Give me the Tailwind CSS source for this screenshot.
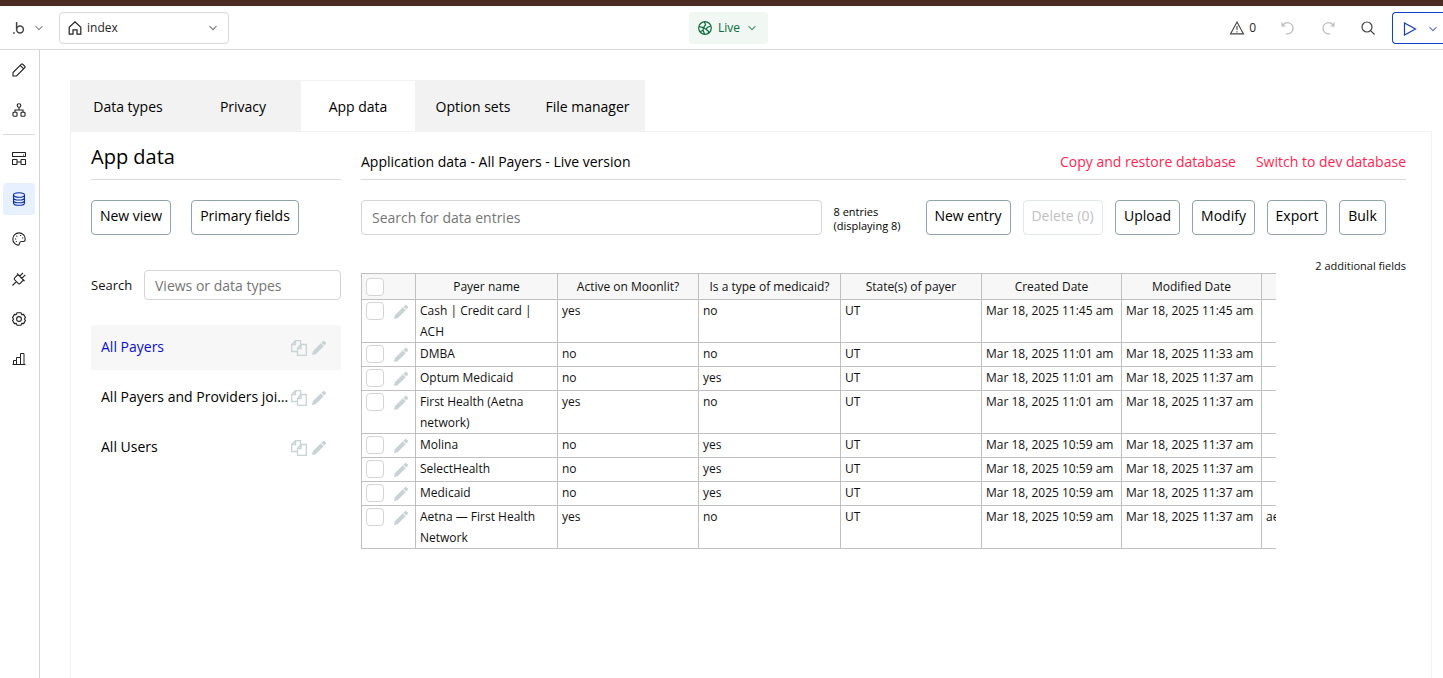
<!DOCTYPE html>
<html lang="en">
<head>
<meta charset="utf-8">
<title>App data</title>
<script src="https://cdn.jsdelivr.net/npm/@tailwindcss/browser@4"></script>
</head>
<body class="h-[678px] w-[1443px] overflow-hidden bg-white font-['Open_Sans','Noto_Sans',sans-serif] text-[14px] text-[#111] antialiased">
<svg class="hidden">
  <symbol id="chev" viewBox="0 0 10 10"><path d="M1.500 3.200 5 6.700l3.500-3.500" fill="none" stroke="currentColor" stroke-width="1.100"/></symbol>
  <symbol id="pen" viewBox="0 0 14 14"><path d="M0 14l.8-3.700L8.800 2.300l2.900 2.900L3.700 13.200zM9.400 1.700l1.300-1.300a1.400 1.400 0 0 1 2 0l.9.9a1.400 1.400 0 0 1 0 2L12.300 4.600z" fill="currentColor"/></symbol>
  <symbol id="copy" viewBox="0 0 16 16"><path d="M6 11.500H.7V4.500L4.500.700H9.500V4.500M4.500.700V4.500H.7M10 4.500h5.300v10.800H6.500V8.500zM10 4.500v4H6.500" fill="none" stroke="currentColor" stroke-width="1.300"/></symbol>
</svg>
<div class="h-1.5 bg-[#4a2c23]"></div>
<header class="flex h-11 items-center border-b border-[#d9d9d9] text-[12px] text-[#262626]">
  <div class="flex w-[59px] items-center pl-3">
    <svg class="h-4 w-4 text-[#444]" viewBox="0 0 16 16" fill="none" stroke="currentColor" stroke-width="1.500"><path d="M4.600 2V9"/><circle cx="8" cy="9.500" r="3.400"/><circle cx="1.900" cy="12.900" r=".9" fill="currentColor" stroke="none"/></svg>
    <svg class="ml-1.5 h-2.5 w-2.5 text-[#888]"><use href="#chev"/></svg>
  </div>
  <div class="flex h-8 w-[170px] items-center rounded border border-[#d9d9d9] pr-2.5 pl-2">
    <svg class="h-[14px] w-[14px] text-[#222]" viewBox="0 0 14 14" fill="none" stroke="currentColor" stroke-width="1.200"><path d="M1.200 13.200V6.300L7 .9l5.800 5.400v6.900H9V8.900H5v4.300z"/></svg>
    <span class="ml-[5px] flex-1">index</span>
    <svg class="h-2.5 w-2.5 text-[#777]"><use href="#chev"/></svg>
  </div>
  <div class="ml-[460px] flex h-8 w-[79px] items-center rounded bg-[#f1f8f4] pl-[9px] text-[#0b6b3a]">
    <svg class="h-[14px] w-[14px]" viewBox="0 0 14 14" fill="none" stroke="currentColor" stroke-width="1.200"><circle cx="7" cy="7" r="6.300"/><path d="M1 5.500 5.500 6.700 7.500 3.800 6.500.8M5.500 6.700 5 9.200 2.300 10.800M13 5 9.500 6.200 8 8.300 10.500 10.300 10.300 12.300M5.500 6.700 8 8.300M5 9.200 6.500 13"/></svg>
    <span class="ml-[6px]">Live</span>
    <svg class="ml-[7px] h-2.5 w-2.5 opacity-70"><use href="#chev"/></svg>
  </div>
  <div class="ml-auto flex items-center">
    <svg class="h-[14px] w-4 text-[#444]" viewBox="0 0 16 14" fill="none" stroke="currentColor" stroke-width="1.100"><path d="M8 1 1.500 12.900h13zM8 5v4M8 10.300v1.200"/></svg>
    <span class="ml-1">0</span>
    <svg class="ml-[25px] h-[14px] w-[14px] text-[#bbb]" viewBox="0 0 14 14" fill="none" stroke="currentColor" stroke-width="1.200"><path d="M1 1.500V5h3.500M1.300 5A5.600 5.600 0 1 1 5 12.700"/></svg>
    <svg class="ml-[26px] h-[14px] w-[14px] text-[#bbb]" viewBox="0 0 14 14" fill="none" stroke="currentColor" stroke-width="1.200"><path d="M13 1.500V5H9.500M12.700 5A5.600 5.600 0 1 0 9 12.700"/></svg>
    <svg class="ml-[26px] h-[14px] w-[14px] text-[#444]" viewBox="0 0 14 14" fill="none" stroke="currentColor" stroke-width="1.200"><circle cx="6" cy="6" r="5"/><path d="m9.600 9.600 3.900 3.900"/></svg>
    <div class="ml-[17px] flex h-8 w-[51px] items-center rounded-l border border-r-0 border-[#0a45c5] pl-[10px] text-[#1a3cae]">
      <svg class="mt-[2px] h-[14px] w-[14px]" viewBox="0 0 14 14" fill="none" stroke="currentColor" stroke-width="1.200"><path d="M1.500 1v12L12.500 7z"/></svg>
      <svg class="ml-[11px] mt-[2px] h-2.5 w-2.5 opacity-70"><use href="#chev"/></svg>
    </div>
  </div>
</header>
<div class="flex h-[628px]">
  <nav class="flex w-10 shrink-0 flex-col border-r border-[#d4d4d4] pl-[3px] text-[#222]">
    <div class="mt-1 flex h-8 w-8 items-center justify-center"><svg class="h-[14px] w-[14px]" viewBox="0 0 14 14" fill="none" stroke="currentColor" stroke-width="1.100"><path d="M1 13V9.500L9.500 1h1L13 3.500v1L4.500 13zM8.200 2.300l3.500 3.500"/></svg></div>
    <div class="mt-2 flex h-8 w-8 items-center justify-center"><svg class="h-[14px] w-[14px]" viewBox="0 0 14 14" fill="none" stroke="currentColor" stroke-width="1.100"><circle cx="7" cy="2.500" r="1.800"/><path d="M7 4.300V7M3 9V7h8v2"/><rect x="1" y="9.200" width="4" height="4" rx=".8"/><rect x="9" y="9.200" width="4" height="4" rx=".8"/></svg></div>
    <div class="mt-2 h-px w-8 bg-[#d9d9d9]"></div>
    <div class="mt-2 flex h-8 w-8 items-center justify-center"><svg class="h-[14px] w-[14px]" viewBox="0 0 14 14" fill="none" stroke="currentColor" stroke-width="1.100"><rect x=".5" y=".5" width="13" height="4" rx=".5"/><rect x=".5" y="7.500" width="4.500" height="5" rx=".5"/><rect x="9" y="7.500" width="4.500" height="5" rx=".5"/><path d="M5 10h4M11 3h1"/></svg></div>
    <div class="mt-2 flex h-8 w-8 items-center justify-center rounded bg-[#e6f0fe] text-[#0f2fa8]"><svg class="h-[14px] w-[14px]" viewBox="0 0 14 14" fill="none" stroke="currentColor" stroke-width="1.100"><ellipse cx="7" cy="3" rx="5.500" ry="2.300"/><path d="M1.500 3v8c0 1.300 2.400 2.300 5.500 2.300s5.500-1 5.500-2.300V3M1.500 5.700C1.500 7 3.900 8 7 8s5.500-1 5.500-2.300M1.500 8.400c0 1.300 2.400 2.300 5.500 2.300s5.500-1 5.500-2.300"/></svg></div>
    <div class="mt-2 flex h-8 w-8 items-center justify-center"><svg class="h-[14px] w-[14px]" viewBox="0 0 14 14" fill="none" stroke="currentColor" stroke-width="1.100"><path d="M7 .9A6.200 6.200 0 0 0 .8 7c0 3.500 3 6.100 5.600 6.100 1.700 0 .3-3.600 2.800-3.600h2.300c1 0 1.700-.8 1.700-2.500C13.200 3.600 10.500.9 7 .9z"/><path d="M3 7h1.200M4.200 4.200h1.200M8 3.500h1.200M10 6h1.200M3.800 9.500h1"/></svg></div>
    <div class="mt-2 flex h-8 w-8 items-center justify-center"><svg class="h-[14px] w-[14px]" viewBox="0 0 14 14" fill="none" stroke="currentColor" stroke-width="1.100"><path d="M5 1.500 12.500 9M6 2.500 2.700 5.800a1.500 1.500 0 0 0 0 2.100l3.400 3.400a1.500 1.500 0 0 0 2.100 0L11.500 8M4.300 9.700.5 13.500M7.700 4.200 10.900 1M9.800 6.300 13.300 2.800"/></svg></div>
    <div class="mt-2 flex h-8 w-8 items-center justify-center"><svg class="h-[14px] w-[14px]" viewBox="0 0 14 14" fill="none" stroke="currentColor" stroke-width="1.100"><path d="M5 .8h4l.7 1.800 1.900-.2 1.900 3.200L12.300 7l1.200 1.400-1.900 3.200-1.900-.2L9 13.200H5l-.7-1.800-1.900.2L.5 8.400 1.700 7 .5 5.600l1.900-3.200 1.900.2z" stroke-linejoin="round"/><circle cx="7" cy="7" r="2.400"/></svg></div>
    <div class="mt-2 flex h-8 w-8 items-center justify-center"><svg class="h-[14px] w-[14px]" viewBox="0 0 14 14" fill="none" stroke="currentColor" stroke-width="1"><path d="M.5 12.500h13M1.500 12.500V8.500h3v4M4.500 8.500V5.500h4v7M8.500 5.500v-4h3.500v11"/></svg></div>
  </nav>
  <main class="flex flex-1 flex-col pt-[30px] pr-[11px] pl-[30px]">
    <div class="flex h-[51px] w-[575px] bg-[#f2f2f2] text-center leading-[53px] text-black">
      <div class="w-[116px]">Data types</div>
      <div class="w-[115px] pr-px">Privacy</div>
      <div class="w-[114px] border-t border-[#f2f2f2] bg-white leading-[51px]">App data</div>
      <div class="w-[116px]">Option sets</div>
      <div class="w-[114px] pr-px">File manager</div>
    </div>
    <div class="flex flex-1 border border-b-0 border-[#f2f2f2] pr-[25px] pl-5">
      <aside class="flex w-[250px] flex-col">
        <h1 class="h-12 border-b border-[#d9d9d9] pt-[11px] text-[20px] leading-7 text-black">App data</h1>
        <div class="mt-5 flex gap-5 text-black">
          <div class="h-[35px] w-20 rounded border border-[#8fa3a8] text-center leading-[29px]">New view</div>
          <div class="h-[35px] w-[108px] rounded border border-[#8fa3a8] text-center leading-[29px]">Primary fields</div>
        </div>
        <div class="mt-[35px] flex h-[30px] items-center justify-between">
          <span class="pt-px text-[13px]">Search</span>
          <div class="h-[30px] w-[197px] rounded border border-[#d4d4d4] pl-2.5 leading-[30px] text-[#757575]">Views or data types</div>
        </div>
        <div id="views" class="mt-[25px] flex flex-col gap-[5px]"></div>
      </aside>
      <section class="ml-5 flex flex-1 flex-col">
        <div class="flex h-12 gap-5 border-b border-[#d9d9d9] pt-5 leading-5">
          <span class="flex-1 text-black">Application data - All Payers - Live version</span>
          <span class="text-[#ff1f52]">Copy and restore database</span>
          <span class="text-[#ff1f52]">Switch to dev database</span>
        </div>
        <div class="mt-5 flex h-[35px] gap-3 text-center leading-[29px] text-black">
          <div class="w-[461px] rounded border border-[#d4d4d4] pl-2.5 text-left leading-[34px] text-[#757575]">Search for data entries</div>
          <div class="-ml-[0.5px] w-[80.5px] pt-[5px] text-left text-[11px] leading-[14px]">8 entries<br>(displaying 8)</div>
          <div class="w-[85px] rounded border border-[#8fa3a8] pr-px">New entry</div>
          <div class="w-20 rounded border border-[#e3e8e9] pr-px text-[#c0c0c0]">Delete (0)</div>
          <div class="w-[65px] rounded border border-[#8fa3a8]">Upload</div>
          <div class="w-[63px] rounded border border-[#8fa3a8]">Modify</div>
          <div class="w-[60px] rounded border border-[#8fa3a8]">Export</div>
          <div class="w-[47px] rounded border border-[#8fa3a8]">Bulk</div>
        </div>
        <div class="mt-[23px] flex items-start justify-between">
          <div class="mt-[15px] w-[915px] overflow-hidden">
            <table class="w-[1056px] table-fixed border-separate border-spacing-0 border-t border-l border-[#c0c0c0] text-[12px] leading-[21px]">
              <colgroup><col class="w-[54px]"><col class="w-[142px]"><col class="w-[141px]"><col class="w-[142px]"><col class="w-[141px]"><col class="w-[140px]"><col class="w-[140px]"><col class="w-[155px]"></colgroup>
              <thead id="head" class="bg-[#f7f7f7]"></thead>
              <tbody id="rows"></tbody>
            </table>
          </div>
          <span class="text-[11px] leading-4">2 additional fields</span>
        </div>
      </section>
    </div>
  </main>
</div>
<script>
const views = ['All Payers', 'All Payers and Providers joined', 'All Users'];
document.getElementById('views').innerHTML = views.map((v, i) => `
  <div class="flex h-[45px] items-center pl-2.5 pr-[15px] ${i ? 'text-black' : 'bg-[#f7f7f7] text-[#0a0fcb]'}">
    <span class="w-[188px] truncate pb-0.5">${v}</span>
    <svg class="ml-[2px] h-4 w-4 text-[#c8d3d5]"><use href="#copy"/></svg>
    <svg class="ml-[5px] h-[14px] w-[14px] text-[#c8d3d5]"><use href="#pen"/></svg>
  </div>`).join('');
const heads = ['Payer name', 'Active on Moonlit?', 'Is a type of medicaid?', 'State(s) of payer', 'Created Date', 'Modified Date', ''];
document.getElementById('head').innerHTML = `<tr class="h-[26px]">
  <th class="border-r border-b border-[#c0c0c0] p-0 pl-1"><div class="h-[18px] w-[18px] rounded border border-[#d4d4d4] bg-white"></div></th>
  ${heads.map(h => `<th class="border-r border-b border-[#c0c0c0] p-0 text-center font-normal">${h}</th>`).join('')}</tr>`;
const rows = [
  ['Cash | Credit card | ACH', 'yes', 'no', '11:45', '11:45'],
  ['DMBA', 'no', 'no', '11:01', '11:33'],
  ['Optum Medicaid', 'no', 'yes', '11:01', '11:37'],
  ['First Health (Aetna network)', 'yes', 'no', '11:01', '11:37'],
  ['Molina', 'no', 'yes', '10:59', '11:37'],
  ['SelectHealth', 'no', 'yes', '10:59', '11:37'],
  ['Medicaid', 'no', 'yes', '10:59', '11:37'],
  ['Aetna — First Health Network', 'yes', 'no', '10:59', '11:37', 'aetna'],
];
document.getElementById('rows').innerHTML = rows.map(r => {
  const cells = [r[0], r[1], r[2], 'UT', `Mar 18, 2025 ${r[3]} am`, `Mar 18, 2025 ${r[4]} am`, r[5] || ''];
  return `<tr class="h-6 align-top">
    <td class="border-r border-b border-[#c0c0c0] p-0 pl-1"><div class="mt-[2px] flex">
      <div class="h-[18px] w-[18px] rounded border border-[#d4d4d4]"></div>
      <svg class="ml-[10px] mt-[3px] h-[14px] w-[14px] text-[#c8d3d5]"><use href="#pen"/></svg></div></td>
    ${cells.map(c => `<td class="border-r border-b border-[#c0c0c0] p-0 pr-1 pl-1">${c}</td>`).join('')}</tr>`;
}).join('');
</script>
</body>
</html>
